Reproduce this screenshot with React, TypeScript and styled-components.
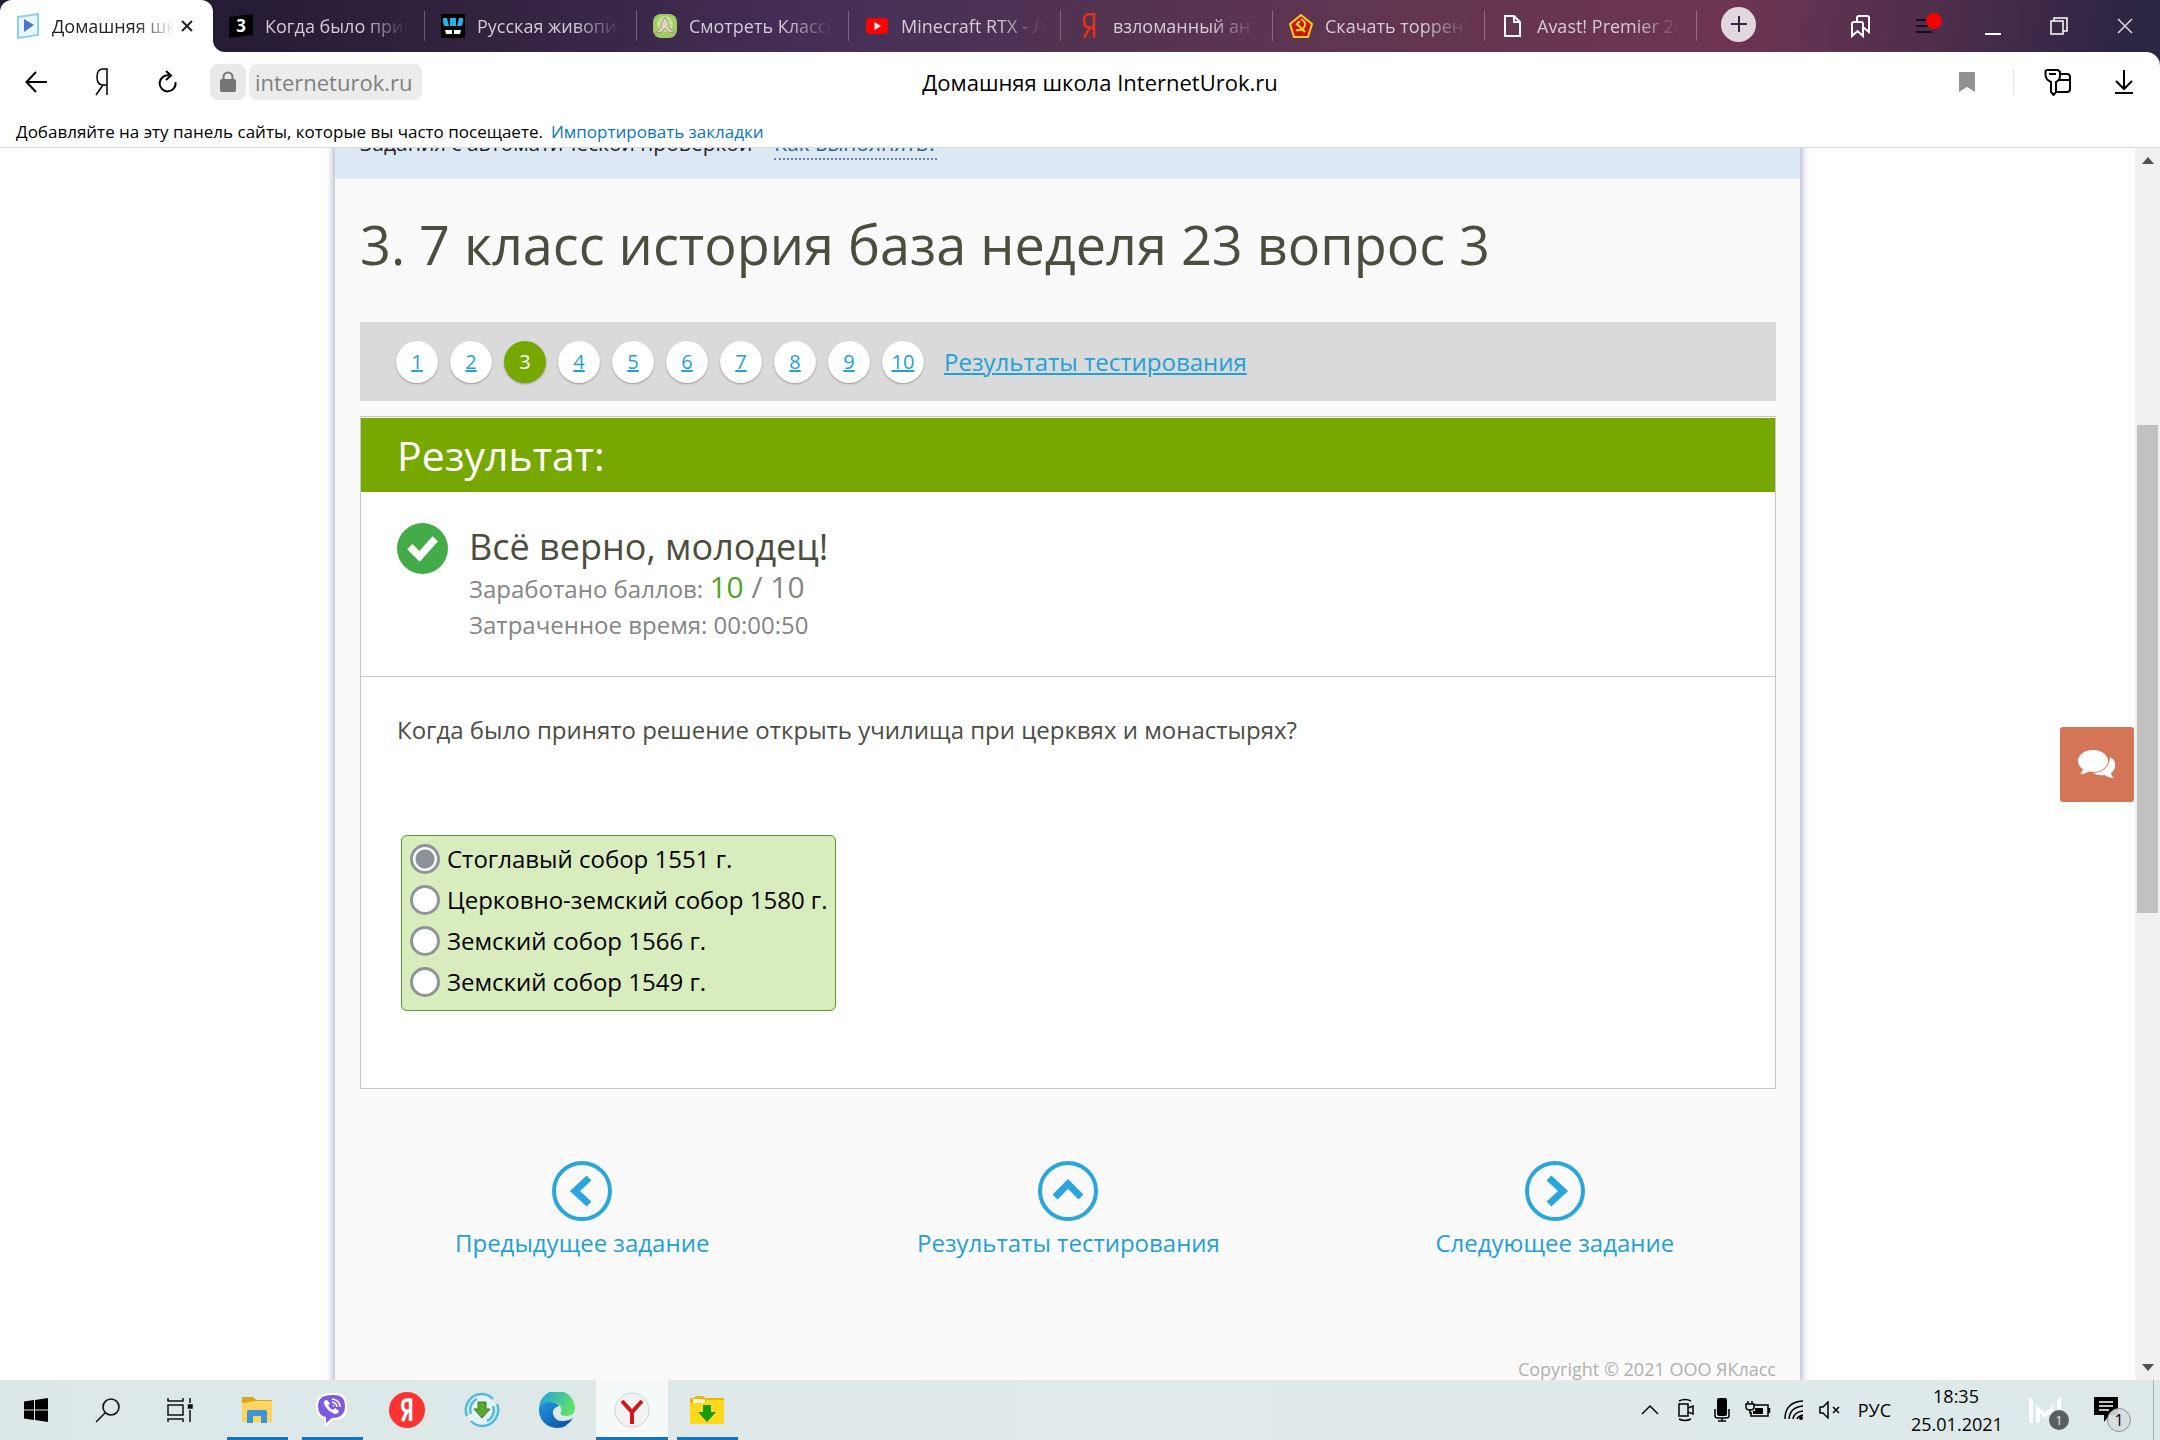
import React from 'react';
import styled, { createGlobalStyle, css } from 'styled-components';

const GlobalStyle = createGlobalStyle`
  *, *::before, *::after { box-sizing: border-box; }
  html, body { margin: 0; height: 100%; overflow: hidden; }
  body { background: #fff; color: #000; font-family: 'Open Sans', 'Noto Sans', sans-serif; }
  button { font: inherit; color: inherit; border: 0; padding: 0; background: none; cursor: pointer; }
  svg { display: block; flex: none; }
  h1, h2, h3, p, fieldset { margin: 0; padding: 0; font-weight: 400; }
`;

const Screen = styled.div`
  display: flex;
  flex-direction: column;
  height: 100vh;
`;

/* Tab strip */

const TabStrip = styled.header`
  display: flex;
  height: 52px;
  background: #fff;
`;

const ActiveTabSlot = styled.div`
  flex: 0 0 213px;
  min-width: 0;
  background: #241a33;
`;

const ActiveTab = styled.div`
  display: flex;
  align-items: center;
  height: 100%;
  padding: 0 14px 0 16px;
  border-radius: 12px 12px 0 0;
  background: #fff;
  color: #222;
`;

const InactiveArea = styled.div`
  flex: 1;
  min-width: 0;
  display: flex;
  align-items: center;
  padding-right: 2px;
  border-bottom-left-radius: 12px;
  background: linear-gradient(100deg, #241a33 0%, #32233f 14%, #452f57 32%, #553450 48%, #63354f 62%, #6d3551 78%, #4b2d4b 89%, #2c2643 98%);
  color: #d5cbd8;
`;

const Tab = styled.div`
  display: flex;
  align-items: center;
  flex: 0 1 212px;
  min-width: 0;
  height: 30px;
  padding: 0 16px;
  border-right: 1px solid rgba(255, 255, 255, 0.28);
`;

const TabTitle = styled.button`
  flex: 1;
  min-width: 0;
  overflow: hidden;
  margin-left: 12px;
  text-align: left;
  font-size: 18px;
  line-height: 28px;
  white-space: nowrap;
  mask-image: linear-gradient(90deg, #000 68%, transparent 100%);
`;

const IconButton = styled.button<{ $w?: number }>`
  display: flex;
  align-items: center;
  justify-content: center;
  width: ${(p) => p.$w ?? 66}px;
  height: 48px;
  flex: none;
`;

const CloseTab = styled(IconButton)`
  width: 24px;
`;

const NewTab = styled.button`
  display: flex;
  align-items: center;
  justify-content: center;
  width: 35px;
  height: 35px;
  margin: 0 0 4px 24px;
  border-radius: 50%;
  background: #e2d7de;
`;

const WindowButtons = styled.div`
  display: flex;
  margin-left: auto;
`;

/* Address bar */

const ToolbarBack = styled.div`
  background: #2c2643;
`;

const Toolbar = styled.div`
  display: grid;
  grid-template-columns: 1fr auto 1fr;
  align-items: center;
  height: 60px;
  background: #fff;
  border-top-right-radius: 14px;
`;

const ToolbarGroup = styled.div<{ $end?: boolean }>`
  display: flex;
  align-items: center;
  ${(p) => p.$end && css`
    justify-content: flex-end;
    padding-right: 14px;
  `}
`;

const LockButton = styled(IconButton)`
  width: 36px;
  height: 36px;
  margin: 0 3px 0 6px;
  border-radius: 8px;
  background: #e9e9e9;
`;

const Address = styled.button`
  height: 36px;
  padding: 0 10px 0 6px;
  border-radius: 8px;
  background: #ececec;
  color: #808080;
  font-size: 22px;
  line-height: 36px;
`;

const PageTitle = styled.div`
  padding-left: 40px;
  font-size: 22px;
  line-height: 36px;
`;

const Divider = styled.span`
  width: 1px;
  height: 26px;
  background: #e2e2e2;
`;

const BookmarkBar = styled.div`
  display: flex;
  gap: 8px;
  height: 36px;
  padding: 6px 16px;
  border-bottom: 1px solid #d9dcde;
  background: #fff;
  font-size: 17px;
  line-height: 28px;
`;

const BarLink = styled.a`
  color: #0a76bf;
  text-decoration: none;
`;

/* Page */

const Viewport = styled.div`
  flex: 1;
  min-height: 0;
  display: flex;
  overflow: hidden;
`;

const Page = styled.main`
  flex: 1;
  min-width: 0;
  overflow: hidden;
`;

const Sheet = styled.div`
  max-width: 1465px;
  min-height: 100%;
  margin: 0 auto;
  background: #fafafa;
  box-shadow: 0 0 8px 1px rgba(60, 70, 120, 0.5);
`;

const Intro = styled.div`
  display: flex;
  gap: 22px;
  margin-top: -20px;
  padding: 0 25px 19px;
  background: #dce9f4;
  font-size: 21px;
  line-height: 30px;
  color: #222;
`;

const HowTo = styled.a`
  color: #33608c;
  border-bottom: 2px dotted #5b86ad;
  text-decoration: none;
`;

const Body = styled.div`
  padding: 29px 24px 0 25px;
`;

const Heading = styled.h1`
  margin-bottom: 42px;
  font-size: 54px;
  line-height: 72px;
  color: #4c4d3f;
`;

const Pager = styled.nav`
  display: flex;
  align-items: center;
  gap: 12px;
  height: 79px;
  margin-bottom: 15px;
  padding: 0 36px;
  background: #dadada;
`;

const PageDot = styled.a<{ $current?: boolean }>`
  display: block;
  width: 42px;
  height: 42px;
  border-radius: 50%;
  background: ${(p) => (p.$current ? '#76a800' : '#fff')};
  color: ${(p) => (p.$current ? '#fff' : '#22a0d8')};
  box-shadow: 0 1px 2px rgba(0, 0, 0, 0.3);
  text-align: center;
  font-size: 20px;
  line-height: 42px;
  text-decoration: ${(p) => (p.$current ? 'none' : 'underline')};
`;

const ResultsLink = styled.a`
  margin-left: 8px;
  font-size: 24px;
  line-height: 36px;
  color: #22a0d8;
`;

const Card = styled.section`
  border: 1px solid #c6c6c6;
  background: #fff;
`;

const CardHeader = styled.h2`
  margin-top: 1px;
  padding: 0 36px;
  background: #76a800;
  color: #fff;
  font-size: 41px;
  line-height: 74px;
`;

const Verdict = styled.div`
  display: flex;
  gap: 21px;
  padding: 31px 36px 33px;
  border-bottom: 1px solid #c6c6c6;
  font-size: 24px;
  line-height: 36px;
  color: #858585;
`;

const VerdictTitle = styled.h3`
  font-size: 36px;
  line-height: 48px;
  color: #4c4d3f;
`;

const Score = styled.span<{ $earned?: boolean }>`
  font-size: 30px;
  line-height: 30px;
  color: ${(p) => (p.$earned ? '#4ca520' : '#858585')};
`;

const Question = styled.div`
  padding: 35px 36px 77px;
`;

const QuestionText = styled.p`
  margin-bottom: 87px;
  font-size: 24px;
  line-height: 36px;
  color: #4c4d45;
`;

const Answers = styled.fieldset`
  display: flex;
  flex-direction: column;
  width: fit-content;
  margin-left: 4px;
  padding: 2px 8px 8px;
  border: 1px solid #4ea02a;
  border-radius: 6px;
  background: #d8ecbd;
`;

const Answer = styled.label`
  display: flex;
  align-items: center;
  gap: 7px;
  height: 41px;
  font-size: 24px;
`;

const Radio = styled.input`
  appearance: none;
  width: 30px;
  height: 30px;
  margin: 0;
  border: 3px solid #8f9498;
  border-radius: 50%;
  background: #fff;
  &:checked { background: radial-gradient(circle, #8c9196 9px, #fff 10px); }
`;

const Steps = styled.nav`
  display: grid;
  grid-template-columns: repeat(3, 1fr);
  margin: 72px 0 94px;
  padding: 0 2px 0 4px;
`;

const Step = styled.a`
  display: flex;
  flex-direction: column;
  align-items: center;
  gap: 4px;
  font-size: 24px;
  line-height: 36px;
  color: #22a0d8;
  text-decoration: none;
`;

const Copyright = styled.footer`
  padding: 0 24px;
  text-align: right;
  font-size: 18px;
  line-height: 28px;
  color: #b0b0b0;
`;

const ScrollTrack = styled.div`
  display: flex;
  flex-direction: column;
  justify-content: space-between;
  flex: 0 0 25px;
  padding: 0 2px;
  background: #f0f0f0;
`;

const ScrollArrow = styled.button`
  display: flex;
  align-items: center;
  justify-content: center;
  height: 25px;
`;

const ScrollRail = styled.div`
  flex: 1;
  display: grid;
  grid-template-rows: 252fr 488fr 442fr;
`;

const ScrollThumb = styled.div`
  grid-row: 2;
  background: #c1c1c1;
`;

const ChatButton = styled.button`
  position: fixed;
  right: 26px;
  top: 727px;
  display: flex;
  align-items: center;
  justify-content: center;
  width: 74px;
  height: 75px;
  border-radius: 3px;
  background: #d37556;
`;

/* Taskbar */

const Taskbar = styled.footer`
  display: flex;
  height: 60px;
  flex: none;
  background: linear-gradient(90deg, #dce7e8, #e0eaea 50%, #dde9e8);
`;

const Apps = styled.div`
  display: flex;
  gap: 3px;
  margin-left: 5px;
`;

const SystemButton = styled.button`
  display: flex;
  align-items: center;
  justify-content: center;
  width: 72px;
`;

const AppButton = styled(SystemButton)<{ $open?: boolean; $front?: boolean }>`
  background: ${(p) => (p.$front ? '#f5f9fa' : 'none')};
  ${(p) =>
    p.$open &&
    css`
      background-image: linear-gradient(#0f74c4, #0f74c4);
      background-repeat: no-repeat;
      background-position: bottom;
      background-size: ${p.$front ? '100%' : '61px'} 3px;
    `}
`;

const Tray = styled.div`
  display: flex;
  align-items: center;
  margin-left: auto;
  font-size: 18px;
  line-height: 28px;
`;

const TrayButton = styled(IconButton)`
  width: 36px;
`;

const Language = styled.button`
  margin-left: 10px;
`;

const Clock = styled.button`
  width: 90px;
  margin: 0 28px 0 20px;
  text-align: center;
  white-space: nowrap;
`;

const Badged = styled.button`
  position: relative;
  width: 40px;
  height: 48px;
  margin-right: 22px;
`;

const Badge = styled.span<{ $light?: boolean }>`
  position: absolute;
  right: 0;
  bottom: ${(p) => (p.$light ? 2 : 4)}px;
  width: ${(p) => (p.$light ? 24 : 20)}px;
  height: ${(p) => (p.$light ? 24 : 20)}px;
  border-radius: 50%;
  border: ${(p) => (p.$light ? '1px solid #8b9090' : '0')};
  background: ${(p) => (p.$light ? 'rgba(215, 220, 220, 0.92)' : '#5a5f61')};
  color: ${(p) => (p.$light ? '#000' : '#e8eeee')};
  font-size: ${(p) => (p.$light ? 16 : 13)}px;
  line-height: ${(p) => (p.$light ? 22 : 20)}px;
  text-align: center;
`;

const ShowDesktop = styled.button`
  width: 7px;
  height: 60px;
  border-left: 1px solid #a5adad;
`;

const line = { fill: 'none', stroke: 'currentColor' };

const PlayIcon = () => (
  <svg width="24" height="26" viewBox="0 0 24 26">
    <path d="M2 4 L22 1 V22 L2 25 Z" fill="#eaf6fc" stroke="#8fd0ef" strokeWidth="2" />
    <path d="M8 6 L18 12 L8 19 Z" fill="#4a78c8" />
  </svg>
);
const ZIcon = () => (
  <svg width="24" height="24" viewBox="0 0 24 24">
    <path d="M0 3 L24 0 V21 L0 24 Z" fill="#000" />
    <text x="12" y="18" fontSize="17" fontWeight="700" fill="#fff" textAnchor="middle" fontFamily="Open Sans">3</text>
  </svg>
);
const WIcon = () => (
  <svg width="24" height="24" viewBox="0 0 24 24">
    <path d="M0 0H24V24H0Z" fill="#000" />
    <path d="M2 4H6L8 12H4Q2 12 2 4ZM9 4H15V12H9ZM18 4H22Q22 12 20 12H16Z" fill="#22b4e8" />
    <path d="M4 16H11V20H5ZM13 16H20L19 20H13Z" fill="#fff" />
  </svg>
);
const TreeIcon = () => (
  <svg width="24" height="24" viewBox="0 0 24 24">
    <rect width="24" height="24" rx="8" fill="#9fcb62" />
    <circle cx="12" cy="10" r="8" fill="#c4e096" />
    <path d="M12 3 Q16 8 16 14 L22 19 L15 18 L12 14 L9 18 L2 19 L8 14 Q8 8 12 3Z" fill="#e0d6c2" stroke="#a2957a" />
  </svg>
);
const YoutubeIcon = () => (
  <svg width="24" height="24" viewBox="0 0 24 24">
    <rect x="1" y="4" width="22" height="16" rx="4" fill="#f00" />
    <path d="M9.500 8 L16 12 L9.500 16Z" fill="#fff" />
  </svg>
);
const YaIcon = () => (
  <svg width="24" height="26" viewBox="0 0 24 26">
    <path d="M17 25 V1 H13 Q7 1 7 8 Q7 14 12 14.500 H17 M12.500 15 L7 25" fill="none" stroke="#e5301c" strokeWidth="2.600" />
  </svg>
);
const SovietIcon = () => (
  <svg width="24" height="24" viewBox="0 0 24 24">
    <path d="M12 1 L23 10 L19 23 H5 L1 10Z" fill="#c8160c" stroke="#f3cb22" strokeWidth="2" />
    <path d="M12 5 Q19 9 14 15 Q11 17 7 16 M8 10 L16 18 M7 11 L11 7" fill="none" stroke="#ffd92e" strokeWidth="2" />
  </svg>
);
const DocIcon = () => (
  <svg width="24" height="24" viewBox="0 0 24 24" {...line} strokeWidth="2">
    <path d="M4 2 H13 L19 8 V22 H4Z M13 2 V8 H19" stroke="#fff" />
  </svg>
);

const tabs: [React.FC, string][] = [
  [ZIcon, 'Когда было приня'],
  [WIcon, 'Русская живопись'],
  [TreeIcon, 'Смотреть Классн'],
  [YoutubeIcon, 'Minecraft RTX - ЛУ'],
  [YaIcon, 'взломанный анти'],
  [SovietIcon, 'Скачать торрент'],
  [DocIcon, 'Avast! Premier 202'],
];

const StepIcon = ({ d }: { d: string }) => (
  <svg width="60" height="60" viewBox="0 0 60 60" fill="none" stroke="#2ba6da">
    <circle cx="30" cy="30" r="28" strokeWidth="4" />
    <path d={d} strokeWidth="7" />
  </svg>
);

const answers = ['Стоглавый собор 1551 г.', 'Церковно-земский собор 1580 г.', 'Земский собор 1566 г.', 'Земский собор 1549 г.'];

const BrowserTop = () => (
  <>
    <TabStrip>
      <ActiveTabSlot>
        <ActiveTab>
          <PlayIcon />
          <TabTitle>Домашняя школа</TabTitle>
          <CloseTab aria-label="Закрыть вкладку">
            <svg width="12" height="12" viewBox="0 0 12 12" {...line} strokeWidth="2"><path d="M1 1 L11 11 M11 1 L1 11" /></svg>
          </CloseTab>
        </ActiveTab>
      </ActiveTabSlot>
      <InactiveArea>
        {tabs.map(([Icon, title]) => (
          <Tab key={title}>
            <Icon />
            <TabTitle>{title}</TabTitle>
          </Tab>
        ))}
        <NewTab aria-label="Новая вкладка">
          <svg width="18" height="18" viewBox="0 0 18 18" stroke="#33263f" strokeWidth="2"><path d="M9 1V17M1 9H17" /></svg>
        </NewTab>
        <WindowButtons>
          <IconButton aria-label="Закладки">
            <svg width="22" height="24" viewBox="0 0 22 24" fill="none" stroke="#fff" strokeWidth="2"><path d="M2 10Q2 8 4 8H11Q13 8 13 10V22L7.500 17L2 22ZM7 8V4Q7 2 9 2H17Q19 2 19 4V18L13 13" /></svg>
          </IconButton>
          <IconButton aria-label="Меню">
            <svg width="30" height="30" viewBox="0 0 30 30"><path d="M4 9H20M4 15H16M4 21H20" stroke="#15101c" strokeWidth="2" /><circle cx="22" cy="10" r="8" fill="#f50000" /></svg>
          </IconButton>
          <IconButton aria-label="Свернуть">
            <svg width="16" height="18" viewBox="0 0 16 18"><path d="M0 17H16" stroke="#fff" strokeWidth="2" /></svg>
          </IconButton>
          <IconButton aria-label="Развернуть">
            <svg width="18" height="18" viewBox="0 0 18 18" fill="none" stroke="#fff" strokeWidth="1.500"><path d="M1 4H13V17H1ZM4 4V1H17V14H13" /></svg>
          </IconButton>
          <IconButton aria-label="Закрыть">
            <svg width="16" height="16" viewBox="0 0 16 16" stroke="#ddd6e0" strokeWidth="1.500"><path d="M1 1L15 15M15 1L1 15" /></svg>
          </IconButton>
        </WindowButtons>
      </InactiveArea>
    </TabStrip>
    <ToolbarBack>
      <Toolbar>
        <ToolbarGroup>
          <IconButton $w={72} aria-label="Назад">
            <svg width="22" height="22" viewBox="0 0 22 22" {...line} strokeWidth="2"><path d="M22 11H2M11 1L1.500 11L11 21" /></svg>
          </IconButton>
          <IconButton $w={60} aria-label="Яндекс">
            <svg width="14" height="28" viewBox="0 0 14 28" {...line} strokeWidth="1.500"><path d="M12 27V1H8Q2 1 2 9Q2 17 8 17H12M8 17L1 27" /></svg>
          </IconButton>
          <IconButton $w={72} aria-label="Обновить">
            <svg width="20" height="24" viewBox="0 0 20 24" {...line} strokeWidth="2"><path d="M11 5.500A8 8 0 1 0 17.500 12M8 1L13 5.500L8 10" /></svg>
          </IconButton>
          <LockButton aria-label="Сведения о сайте">
            <svg width="18" height="22" viewBox="0 0 18 22"><rect x="1" y="8" width="16" height="13" rx="2" fill="#757575" /><path d="M4.500 9V6A4.500 4.500 0 0 1 13.500 6V9" fill="none" stroke="#757575" strokeWidth="2" /></svg>
          </LockButton>
          <Address>interneturok.ru</Address>
        </ToolbarGroup>
        <PageTitle>Домашняя школа InternetUrok.ru</PageTitle>
        <ToolbarGroup $end>
          <IconButton $w={92} aria-label="В закладки">
            <svg width="16" height="20" viewBox="0 0 16 20"><path d="M0 0H16V20L8 15L0 20Z" fill="#929292" /></svg>
          </IconButton>
          <Divider />
          <IconButton $w={88} aria-label="Пароли">
            <svg width="28" height="28" viewBox="0 0 28 28" {...line} strokeWidth="2"><path d="M3 2H14L16 4V8Q16 12 12 14V24L9.500 27L7 24V14Q2 12 1.500 7V3ZM5 6H12M16 6H23Q26 6 26 9V21Q26 24 23 24H12M15 12H26" /></svg>
          </IconButton>
          <IconButton $w={44} aria-label="Загрузки">
            <svg width="18" height="24" viewBox="0 0 18 24" {...line} strokeWidth="2"><path d="M9 0V18M1 11L9 19L17 11M0 23H18" /></svg>
          </IconButton>
        </ToolbarGroup>
      </Toolbar>
    </ToolbarBack>
    <BookmarkBar>
      <span>Добавляйте на эту панель сайты, которые вы часто посещаете.</span>
      <BarLink href="#import">Импортировать закладки</BarLink>
    </BookmarkBar>
  </>
);

const Lesson = () => (
  <Sheet>
    <Intro>
      <span>Задания с автоматической проверкой</span>
      <HowTo href="#how">Как выполнять?</HowTo>
    </Intro>
    <Body>
      <Heading>3. 7 класс история база неделя 23 вопрос 3</Heading>
      <Pager>
        {Array.from({ length: 10 }, (_, i) => (
          <PageDot key={i} href={`#q${i + 1}`} $current={i === 2}>{i + 1}</PageDot>
        ))}
        <ResultsLink href="#results">Результаты тестирования</ResultsLink>
      </Pager>
      <Card>
        <CardHeader>Результат:</CardHeader>
        <Verdict>
          <svg width="51" height="51" viewBox="0 0 52 52">
            <circle cx="26" cy="26" r="26" fill="#43ac49" />
            <path d="M13 24L23 34L39 16" fill="none" stroke="#fff" strokeWidth="7.500" />
          </svg>
          <div>
            <VerdictTitle>Всё верно, молодец!</VerdictTitle>
            <p>Заработано баллов: <Score $earned>10</Score><Score> / 10</Score></p>
            <p>Затраченное время: 00:00:50</p>
          </div>
        </Verdict>
        <Question>
          <QuestionText>Когда было принято решение открыть училища при церквях и монастырях?</QuestionText>
          <Answers>
            {answers.map((text, i) => (
              <Answer key={text}>
                <Radio type="radio" name="answer" defaultChecked={i === 0} />
                {text}
              </Answer>
            ))}
          </Answers>
        </Question>
      </Card>
    </Body>
    <Steps>
      <Step href="#prev"><StepIcon d="M37 17L23 30L37 43" />Предыдущее задание</Step>
      <Step href="#results"><StepIcon d="M17 36L30 23L43 36" />Результаты тестирования</Step>
      <Step href="#next"><StepIcon d="M24 17L38 30L24 43" />Следующее задание</Step>
    </Steps>
    <Copyright>Copyright © 2021 ООО ЯКласс</Copyright>
  </Sheet>
);

const WindowsTaskbar = () => (
  <Taskbar>
    <SystemButton aria-label="Пуск">
      <svg width="24" height="24" viewBox="0 0 24 24"><path d="M0 3.500L10 2V11.500H0ZM11 2L24 0V11.500H11ZM0 12.500H10V22L0 20.500ZM11 12.500H24V24L11 22Z" /></svg>
    </SystemButton>
    <SystemButton aria-label="Поиск">
      <svg width="26" height="26" viewBox="0 0 26 26" fill="none" stroke="#111" strokeWidth="1.600"><circle cx="16" cy="10" r="8" /><path d="M10 16L1 25" /></svg>
    </SystemButton>
    <SystemButton aria-label="Представление задач">
      <svg width="26" height="24" viewBox="0 0 26 24" fill="none" stroke="#111" strokeWidth="1.500"><path d="M1 0V3H16V0M1 7H16V17H1ZM1 24V21H16V24M23 0V5M23 12V24" /><path d="M21.500 7H25V10H21.500Z" fill="#111" /></svg>
    </SystemButton>
    <Apps>
      <AppButton $open aria-label="Проводник">
        <svg width="34" height="30" viewBox="0 0 34 30"><path d="M2 2H13L16 5H32V26H2Z" fill="#d9a520" /><path d="M2 8L15 6H32V27H2Z" fill="#fcd462" /><path d="M7 28V17Q7 15 9 15H25Q27 15 27 17V28H21V21H13V28Z" fill="#3f94d8" /></svg>
      </AppButton>
      <AppButton $open aria-label="Viber">
        <svg width="36" height="36" viewBox="0 0 36 36"><path d="M18 1Q33 0 33 14Q34 29 19 28L11 35V27Q2 25 2 14Q2 1 18 1Z" fill="#fff" /><path d="M18 3Q31 2 31 14Q31 26 18 26L12 31V25Q4 24 4 14Q4 3 18 3Z" fill="#7d5be0" /><path d="M12 8Q9 9 10 12Q13 19 21 22Q24 22 25 19L21 16L19 18Q15 16 14 13L16 12L13 8Z" fill="#fff" /><path d="M18 7Q26 8 26 15M18 10Q23 11 23 15M19 13L20 14" fill="none" stroke="#fff" strokeWidth="1.500" /></svg>
      </AppButton>
      <AppButton aria-label="Яндекс">
        <svg width="36" height="36" viewBox="0 0 36 36"><circle cx="18" cy="18" r="18" fill="#fb3331" /><path d="M21.500 29V8H18.500Q13.500 8 13.500 13.500Q13.500 18.500 18 19H21.500M18 19L13.500 29" fill="none" stroke="#fff" strokeWidth="3.500" /></svg>
      </AppButton>
      <AppButton aria-label="MediaGet">
        <svg width="36" height="36" viewBox="0 0 36 36"><circle cx="18" cy="18" r="15" fill="#e3f3f8" /><path d="M3 24A16 16 0 0 1 18 2M33 12A16 16 0 0 1 18 34M18 2A16 16 0 0 1 29 7M18 34A16 16 0 0 1 7 29M7 22A12 12 0 0 1 13 7M29 14A12 12 0 0 1 23 29" fill="none" stroke="#52bbe0" strokeWidth="2.500" /><path d="M14 10H22V17H26L18 26L10 17H14Z" fill="#58a82e" stroke="#3c7a1d" /></svg>
      </AppButton>
      <AppButton aria-label="Microsoft Edge">
        <svg width="36" height="36" viewBox="0 0 36 36">
          <defs>
            <linearGradient id="edgeTop" x1="0" y1="0" x2="1" y2="0.400"><stop offset="0" stopColor="#1f9de0" /><stop offset="1" stopColor="#5fe06a" /></linearGradient>
            <linearGradient id="edgeBase" x1="0" y1="0" x2="1" y2="1"><stop offset="0" stopColor="#2196e0" /><stop offset="1" stopColor="#0c4aa0" /></linearGradient>
          </defs>
          <path d="M0 17A18 18 0 0 1 36 16Q36 24 27 24Q20 24 22 20Q24 16 19 12Q10 7 0 17Z" fill="url(#edgeTop)" />
          <path d="M0 17Q3 9 12 10Q19 11 20 14Q13 16 14 22Q16 30 25 29Q30 29 34 26Q28 36 18 36A18 18 0 0 1 0 17Z" fill="url(#edgeBase)" />
        </svg>
      </AppButton>
      <AppButton $open $front aria-label="Яндекс.Браузер">
        <svg width="36" height="36" viewBox="0 0 36 36"><circle cx="18" cy="18" r="17" fill="#f3f3f4" stroke="#d2d2d4" /><path d="M8 9L18 20L28 9M18 19V32" fill="none" stroke="#d0161b" strokeWidth="4" /></svg>
      </AppButton>
      <AppButton $open aria-label="Загрузки">
        <svg width="34" height="30" viewBox="0 0 34 30"><path d="M0 3H4L6 1H13L15 3H34V29H0Z" fill="#f0b400" /><path d="M3 4H15V8H3Z" fill="#fff6d5" /><path d="M0 8H13L17 5H34V29H0Z" fill="#ffd91a" /><path d="M13 10H21V17H26L17 27L8 17H13Z" fill="#159a12" /></svg>
      </AppButton>
    </Apps>
    <Tray>
      <TrayButton aria-label="Скрытые значки">
        <svg width="18" height="12" viewBox="0 0 18 12" {...line} strokeWidth="1.500"><path d="M1 10L9 2L17 10" /></svg>
      </TrayButton>
      <TrayButton aria-label="Камера">
        <svg width="18" height="24" viewBox="0 0 18 24" {...line} strokeWidth="1.500"><path d="M2 6H11V18H2ZM11 10L16 8V16L11 14M2 3Q8 0 14 3M2 21Q8 24 14 21" /></svg>
      </TrayButton>
      <TrayButton aria-label="Микрофон">
        <svg width="16" height="24" viewBox="0 0 16 24"><rect x="3" width="10" height="18" rx="2" /><path d="M1 11V18Q1 20 4 20H12Q15 20 15 18V11M8 20V23M4 23H12" {...line} strokeWidth="1.500" /></svg>
      </TrayButton>
      <TrayButton aria-label="Батарея">
        <svg width="26" height="20" viewBox="0 0 26 20" {...line} strokeWidth="1.500"><path d="M9 5H23V16H6V12M24.500 8V13M3 1V4M7 1V4M1 4H9V7Q9 10 5 10Q1 10 1 7ZM5 10V13H6" /><path d="M10 8H18V14H8V11H10Z" fill="currentColor" stroke="none" /></svg>
      </TrayButton>
      <TrayButton aria-label="Сеть">
        <svg width="20" height="20" viewBox="0 0 20 20" {...line} strokeWidth="1.500"><path d="M1 19Q1 2 19 1M5 19Q6 7 19 6M9 19Q10 12 19 11M13 19Q14 16 19 15" /><circle cx="17" cy="18" r="2" fill="currentColor" stroke="none" /></svg>
      </TrayButton>
      <TrayButton aria-label="Звук выключен">
        <svg width="22" height="18" viewBox="0 0 22 18" {...line} strokeWidth="1.500"><path d="M1 6H4L9 1V17L4 12H1ZM14 6L20 12M20 6L14 12" /></svg>
      </TrayButton>
      <Language>РУС</Language>
      <Clock>18:35<br />25.01.2021</Clock>
      <Badged aria-label="Уведомления MediaGet">
        <svg width="34" height="26" viewBox="0 0 34 26"><path d="M0 0L4 3V26H0ZM7 8L16 16L25 8V26H21V16L16 21L11 16V26H7ZM28 3L32 0V26H28Z" fill="#fff" /></svg>
        <Badge>1</Badge>
      </Badged>
      <Badged aria-label="Центр уведомлений">
        <svg width="40" height="26" viewBox="0 0 40 26"><path d="M3 0H27V18H19L13 25V18H3Z" /><path d="M8 5H22M8 9H22M8 13H18" stroke="#fff" strokeWidth="1.500" /></svg>
        <Badge $light>1</Badge>
      </Badged>
      <ShowDesktop aria-label="Свернуть все окна" />
    </Tray>
  </Taskbar>
);

export default function App() {
  return (
    <Screen>
      <GlobalStyle />
      <BrowserTop />
      <Viewport>
        <Page><Lesson /></Page>
        <ScrollTrack>
          <ScrollArrow aria-label="Вверх"><svg width="12" height="8" viewBox="0 0 12 8"><path d="M6 0L12 7H0Z" fill="#505050" /></svg></ScrollArrow>
          <ScrollRail><ScrollThumb /></ScrollRail>
          <ScrollArrow aria-label="Вниз"><svg width="12" height="8" viewBox="0 0 12 8"><path d="M6 7L12 0H0Z" fill="#505050" /></svg></ScrollArrow>
        </ScrollTrack>
      </Viewport>
      <ChatButton aria-label="Чат">
        <svg width="40" height="32" viewBox="0 0 40 32" fill="#fff">
          <path d="M33 8Q39 11 38 17Q38 21 34 24Q34 27 37 29Q31 29 28 26Q21 27 16 24Q32 23 33 8Z" />
          <ellipse cx="16" cy="12" rx="15" ry="11" /><path d="M6 18Q6 23 3 25Q10 25 13 21Z" />
        </svg>
      </ChatButton>
      <WindowsTaskbar />
    </Screen>
  );
}
